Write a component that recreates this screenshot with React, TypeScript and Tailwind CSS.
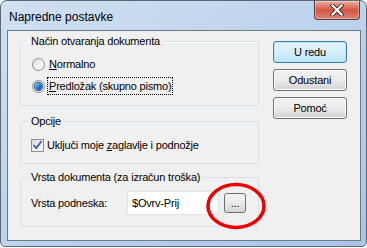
import React from "react";

const font = { fontFamily: '"Liberation Sans", Arial, sans-serif' };

function Radio({ checked }: { checked?: boolean }) {
  return (
    <span className="relative flex h-[13px] w-[13px] shrink-0 items-center justify-center rounded-full border border-[#8a8a8a] bg-gradient-to-br from-[#d9d9d9] via-[#f4f4f4] to-[#ffffff]">
      {checked && (
        <span className="h-[7px] w-[7px] rounded-full bg-gradient-to-br from-[#8fd1f6] via-[#2a7fcd] to-[#0c4a8c] shadow-[0_0_0_1px_#1b5a9a]" />
      )}
    </span>
  );
}

function Checkbox() {
  return (
    <span className="flex h-[13px] w-[13px] shrink-0 items-center justify-center border border-[#8e8f8f] bg-gradient-to-br from-[#dcdcdc] to-[#fbfbfb]">
      <svg width="11" height="11" viewBox="0 0 11 11">
        <path d="M2 5.5 L4.3 8.2 L9 1.8" fill="none" stroke="#3a5fa8" strokeWidth="1.8" strokeLinecap="round" strokeLinejoin="round" />
      </svg>
    </span>
  );
}

function Btn({ children, def }: { children: React.ReactNode; def?: boolean }) {
  return (
    <div
      className={
        "flex h-[22px] w-[74px] items-center justify-center rounded-[3px] border text-black " +
        (def
          ? "border-[#3c7fb1] bg-gradient-to-b from-[#e8f6fd] via-[#d4eefb] to-[#bee6fd] shadow-[inset_0_0_0_1px_#b8e7fc]"
          : "border-[#707070] bg-gradient-to-b from-[#f2f2f2] via-[#ebebeb] to-[#d3d3d3] shadow-[inset_0_0_0_1px_#fcfcfc]")
      }
    >
      {children}
    </div>
  );
}

export default function App() {
  return (
    <div className="relative h-[248px] w-[367px] overflow-hidden bg-white" style={font}>
      <div className="flex h-[247px] w-[367px] flex-col rounded-t-[7px] rounded-b-[5px] border border-[#5a6876] bg-gradient-to-br from-[#cfe0f2] via-[#bcd3ec] to-[#a9c5e6] pl-[6px] pr-[5px] pb-[5px]">
        {/* title bar */}
        <div className="flex h-[29px] shrink-0 items-start">
          <div className="pl-[2px] pt-[8px] text-[12px] leading-[16px] text-black">Napredne postavke</div>
          <div className="ml-auto mr-[1px] flex h-[19px] w-[46px] items-center justify-center rounded-b-[4px] border border-t-0 border-[#5c3a3a] bg-gradient-to-b from-[#eab1a4] via-[#d25540] to-[#d98474] shadow-[inset_0_0_0_1px_rgba(255,255,255,0.35)]">
            <svg width="14" height="12" viewBox="0 0 14 12">
              <path d="M2.5 1.5 L11.5 10.5 M11.5 1.5 L2.5 10.5" stroke="#3a2a2a" strokeWidth="4" strokeLinecap="square" />
              <path d="M2.5 1.5 L11.5 10.5 M11.5 1.5 L2.5 10.5" stroke="#ffffff" strokeWidth="2.2" strokeLinecap="square" />
            </svg>
          </div>
        </div>
        {/* client */}
        <div className="relative flex h-[211px] w-[354px] border border-[#6a7a8a] bg-[#f0f0f0] text-[11px] tracking-[-0.2px] text-black">
          <div className="ml-[12px] mt-[2px] flex w-[239px] flex-col">
            <fieldset className="h-[73px] rounded-[3px] border border-[#d5dfe5] px-[11px] shadow-[inset_1px_1px_0_#fff]">
              <legend className="ml-[-4px] px-[3px] leading-[16px]">Način otvaranja dokumenta</legend>
              <div className="mt-[7px] flex items-center gap-[3px] leading-[16px]">
                <Radio />
                <span className="pl-[1px]"><span className="underline">N</span>ormalno</span>
              </div>
              <div className="mt-[5px] flex items-center gap-[2px] leading-[16px]">
                <Radio checked />
                <span className="border border-dotted border-black px-[1px]"><span className="underline">P</span>redložak (skupno pismo)</span>
              </div>
            </fieldset>
            <fieldset className="mt-[7px] h-[51px] rounded-[3px] border border-[#d5dfe5] px-[10px]">
              <legend className="ml-[-3px] px-[3px] leading-[16px]">Opcije</legend>
              <div className="mt-[8px] flex items-center gap-[3px] leading-[16px]">
                <Checkbox />
                <span>Uključi moje <span className="underline">z</span>aglavlje i podnožje</span>
              </div>
            </fieldset>
            <fieldset className="mt-[5px] h-[58px] rounded-[3px] border border-[#d5dfe5] px-[10px]">
              <legend className="ml-[-3px] px-[3px] leading-[16px]">Vrsta dokumenta (za izračun troška)</legend>
              <div className="mt-[6px] flex items-center">
                <span className="w-[96px]">Vrsta podneska:</span>
                <div className="flex h-[24px] w-[92px] items-center border border-[#e3e3e3] bg-white pl-[4px]">$Ovrv-Prij</div>
                <div className="ml-[5px] flex h-[20px] w-[22px] items-end justify-center rounded-[3px] border border-[#707070] bg-gradient-to-b from-[#f2f2f2] via-[#ebebeb] to-[#d3d3d3] pb-[3px] text-[11px] leading-[11px]">...</div>
              </div>
            </fieldset>
          </div>
          <div className="ml-[14px] mt-[10px] flex flex-col gap-[6px]">
            <Btn def>U redu</Btn>
            <Btn>Odustani</Btn>
            <Btn>Pomoć</Btn>
          </div>
          <svg className="pointer-events-none absolute left-[197px] top-[151px]" width="62" height="48" viewBox="0 0 62 48">
            <ellipse cx="31" cy="24" rx="28" ry="21.5" fill="none" stroke="#ee0000" strokeWidth="3.5" />
          </svg>
        </div>
      </div>
    </div>
  );
}
